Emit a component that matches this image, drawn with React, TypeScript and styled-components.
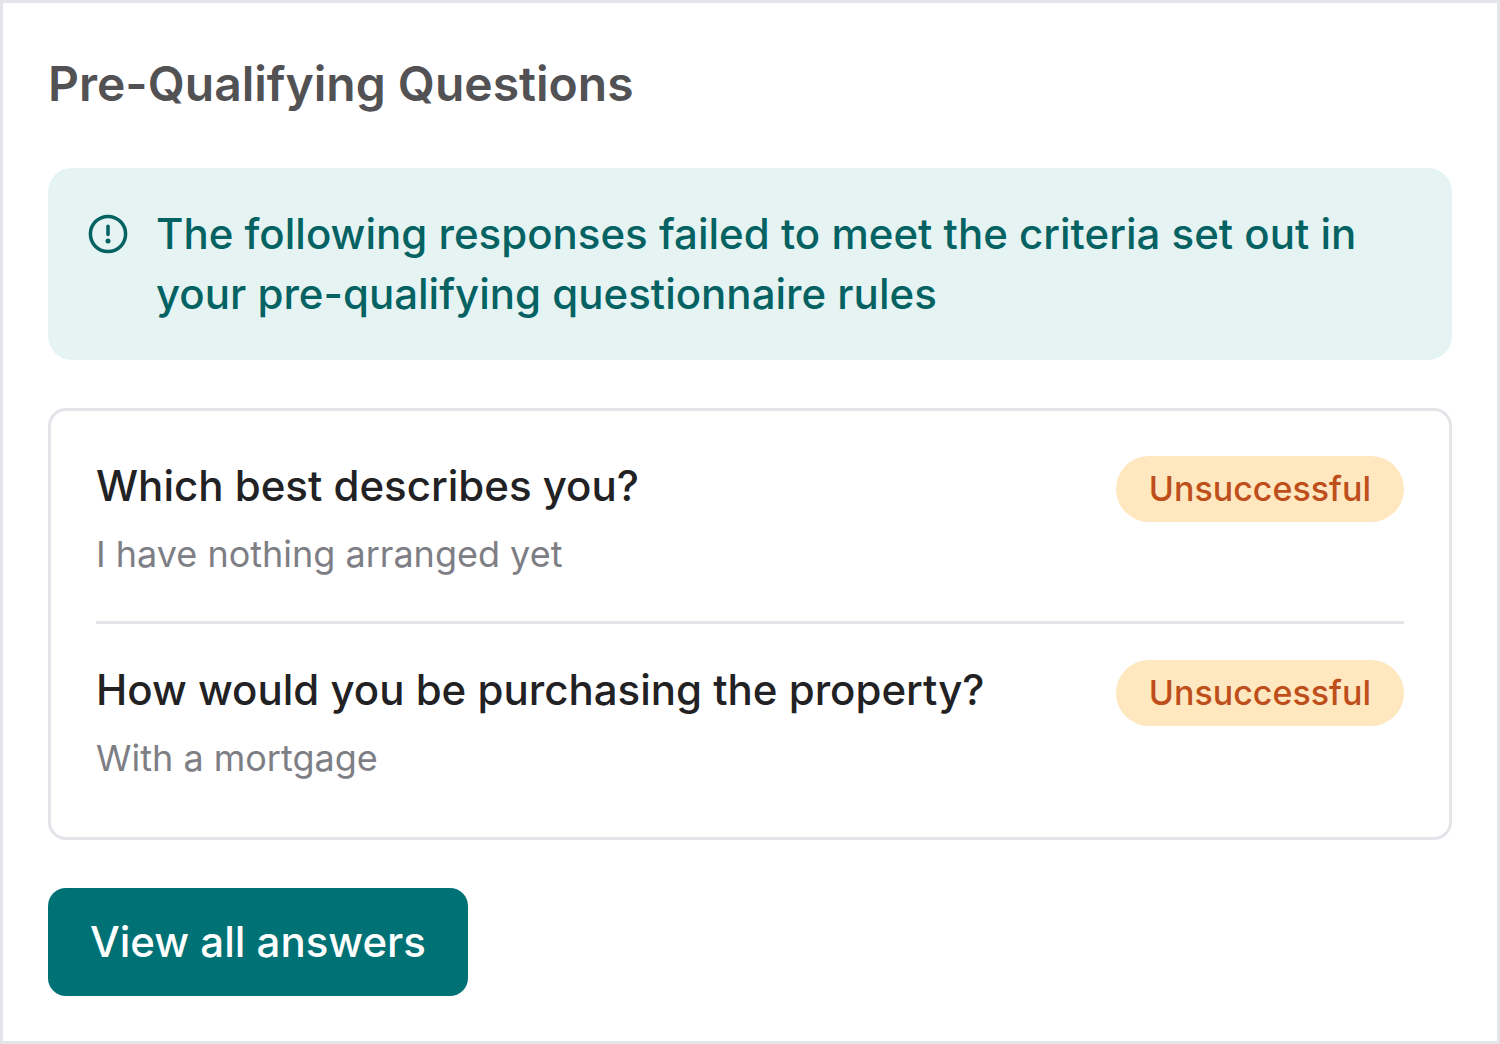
import React from "react";
import styled, { createGlobalStyle } from "styled-components";

const GlobalStyle = createGlobalStyle`
  *, *::before, *::after { box-sizing: border-box; }
  body {
    margin: 0;
    background: #fff;
    font-family: Inter, "Liberation Sans", sans-serif;
  }
`;

const Card = styled.main`
  display: flex;
  flex-direction: column;
  align-items: stretch;
  gap: 48px;
  min-height: 100vh;
  padding: 45px;
  border: 3px solid #e4e4eb;
  background: #fff;
`;

const Title = styled.h1`
  margin: 0;
  font-weight: 600;
  font-size: 48px;
  line-height: 72px;
  color: #525255;
`;

const Notice = styled.div`
  display: flex;
  align-items: flex-start;
  gap: 24px;
  padding: 36px;
  border-radius: 24px;
  background: #e5f4f3;
  color: #046263;
`;

const NoticeIcon = styled.svg`
  flex: none;
  width: 48px;
  height: 48px;
  margin-top: 6px;
`;

const NoticeText = styled.p`
  margin: 0;
  font-weight: 500;
  font-size: 42px;
  line-height: 60px;
`;

const Answers = styled.ul`
  list-style: none;
  margin: 0;
  padding: 9px 45px 12px;
  border: 3px solid #e4e4e9;
  border-radius: 18px;
`;

const AnswerRow = styled.li`
  display: flex;
  align-items: flex-start;
  justify-content: space-between;
  gap: 24px;
  padding: 36px 0 39px;

  & + & {
    border-top: 3px solid #e4e4e9;
  }
`;

const Question = styled.h2`
  margin: 0;
  font-weight: 500;
  font-size: 42px;
  line-height: 60px;
  color: #222224;
`;

const Answer = styled.p`
  margin: 10px 0 0;
  font-size: 36px;
  line-height: 56px;
  color: #7e7e85;
`;

const Badge = styled.span`
  flex: none;
  padding: 6px 33px;
  border-radius: 33px;
  background: #ffe7c0;
  color: #be4f1b;
  font-size: 34px;
  font-weight: 500;
  line-height: 54px;
`;

const Button = styled.button`
  align-self: flex-start;
  padding: 24px 42px;
  border: 0;
  border-radius: 18px;
  background: #007174;
  color: #fff;
  font: 500 42px/60px Inter, "Liberation Sans", sans-serif;
  cursor: pointer;
`;

const responses = [
  { question: "Which best describes you?", answer: "I have nothing arranged yet", status: "Unsuccessful" },
  { question: "How would you be purchasing the property?", answer: "With a mortgage", status: "Unsuccessful" },
];

export default function App() {
  return (
    <>
      <GlobalStyle />
      <Card>
        <Title>Pre-Qualifying Questions</Title>
        <Notice role="status">
          <NoticeIcon viewBox="0 0 48 48" fill="none" stroke="currentColor" strokeWidth="3.5" strokeLinecap="round" aria-hidden="true">
            <circle cx="24" cy="24" r="17.6" />
            <path d="M24 16.2v8.4" />
            <circle cx="24" cy="31" r="2.5" fill="currentColor" stroke="none" />
          </NoticeIcon>
          <NoticeText>
            The following responses failed to meet the criteria set out in your pre-qualifying questionnaire rules
          </NoticeText>
        </Notice>
        <Answers>
          {responses.map((r) => (
            <AnswerRow key={r.question}>
              <div>
                <Question>{r.question}</Question>
                <Answer>{r.answer}</Answer>
              </div>
              <Badge>{r.status}</Badge>
            </AnswerRow>
          ))}
        </Answers>
        <Button type="button">View all answers</Button>
      </Card>
    </>
  );
}
